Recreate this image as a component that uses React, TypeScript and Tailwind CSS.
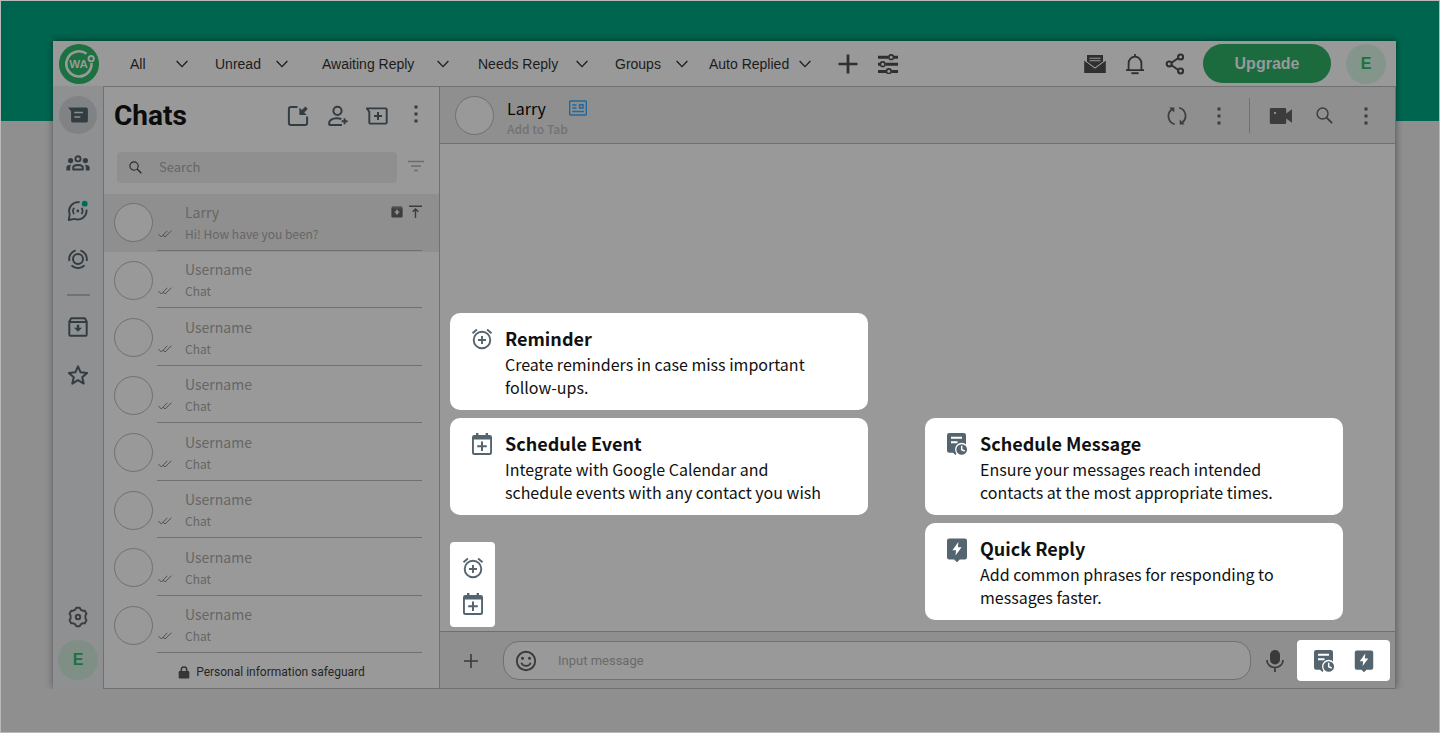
import type { ReactNode } from "react";

type IconProps = { className?: string };

const Svg = ({ className = "", box = "0 0 24 24", children }: { className?: string; box?: string; children: ReactNode }) => (
  <svg viewBox={box} className={"shrink-0 " + className} fill="none" stroke="currentColor" aria-hidden="true">
    {children}
  </svg>
);

const Logo = ({ className }: IconProps) => (
  <Svg className={className} box="0 0 40 40">
    <circle cx="20" cy="20" r="20" fill="#1b713f" stroke="none" />
    <path d="M27.5 9.8A12.6 12.6 0 1 0 32.5 19" stroke="#999" strokeWidth="2.6" />
    <circle cx="32.2" cy="14.7" r="2.6" stroke="#999" strokeWidth="2" />
    <text x="19.6" y="24.1" textAnchor="middle" fill="#999" stroke="none" fontSize="11.5" fontWeight="700" fontFamily="Liberation Sans, sans-serif">
      WA
    </text>
  </Svg>
);

const Chevron = ({ className }: IconProps) => (
  <Svg className={className} box="0 0 12 8">
    <path d="M.6 1 6 6.6 11.4 1" strokeWidth="1.3" />
  </Svg>
);

const Plus = ({ className }: IconProps) => (
  <Svg className={className} box="0 0 20 20">
    <path d="M10 .5v19M.5 10h19" strokeWidth="2.7" />
  </Svg>
);

const Sliders = ({ className }: IconProps) => (
  <Svg className={className} box="0 0 20 20">
    <path d="M0 3.2h10.5M16 3.2h4M0 10.2h2M7.5 10.2H20M0 17.4h8M13.5 17.4H20" strokeWidth="3" />
    <circle cx="13.2" cy="3.2" r="2.3" strokeWidth="1.6" />
    <circle cx="4.7" cy="10.2" r="2.3" strokeWidth="1.6" />
    <circle cx="10.8" cy="17.2" r="2.3" strokeWidth="1.6" />
  </Svg>
);

const Mail = ({ className }: IconProps) => (
  <Svg className={className} box="0 0 22 20">
    <path d="M3 1h16v7l-8 5.8L3 8z" fill="currentColor" stroke="none" />
    <path d="M5.5 4.3h11M5.5 6.7h11" stroke="#999" strokeWidth="1.1" />
    <path d="M.2 6.5 11 14.4l10.8-7.9V19H.2z" fill="currentColor" stroke="none" />
    <path d="M.4 6.2 11 14l10.6-7.8" stroke="#999" strokeWidth="1" />
  </Svg>
);

const Bell = ({ className }: IconProps) => (
  <Svg className={className} box="0 0 20 22">
    <path d="M1 17.2h18M3.6 17V10.5a6.4 6.9 0 0 1 12.8 0V17M10 1v3" strokeWidth="1.8" />
    <path d="M6.4 20.2h7.2" strokeWidth="1.9" />
  </Svg>
);

const Share = ({ className }: IconProps) => (
  <Svg className={className} box="0 0 20 22">
    <path d="m6.6 9.7 6.4-4.400M6.6 12.300l6.400 4.400" strokeWidth="2" />
    <circle cx="4.200" cy="11" r="2.500" strokeWidth="2.100" />
    <circle cx="15.600" cy="4" r="2.500" strokeWidth="2.100" />
    <circle cx="15.600" cy="18" r="2.500" strokeWidth="2.100" />
  </Svg>
);

const ChatBubble = ({ className }: IconProps) => (
  <Svg className={className} box="0 0 20 16">
    <path d="M.1.400H18a1.900 1.900 0 0 1 1.900 1.900v11.400a1.900 1.900 0 0 1-1.900 1.900H5a1.900 1.900 0 0 1-1.900-1.900V4.200z" fill="currentColor" stroke="none" />
    <path d="M6.300 5.500h8.600M6.300 10h6" stroke="#8d8e90" strokeWidth="1.700" />
  </Svg>
);

const Community = ({ className }: IconProps) => (
  <Svg className={className} box="0 0 24 16">
    <circle cx="12" cy="3.800" r="2.600" strokeWidth="1.900" />
    <circle cx="4.600" cy="5.600" r="2.600" fill="currentColor" stroke="none" />
    <circle cx="19.400" cy="5.600" r="2.600" fill="currentColor" stroke="none" />
    <path d="M7.200 14.500v-2c0-1.600 2.200-2.600 4.800-2.600s4.800 1 4.800 2.600v2z" strokeWidth="2" strokeLinejoin="round" />
    <path d="M.4 15.400v-3c0-1.600 1.600-2.700 4.600-2.700-.6 1-.8 1.900-.8 2.900v2.800zM23.600 15.400v-3c0-1.600-1.600-2.700-4.600-2.700.6 1 .8 1.900.8 2.900v2.800z" fill="currentColor" stroke="none" />
  </Svg>
);

const Channel = ({ className }: IconProps) => (
  <Svg className={className} box="0 0 22 22">
    <path d="M12.600 2.300A8.900 8.900 0 0 0 2.700 14.200L1.800 20l5.700-1.100A8.900 8.900 0 0 0 19.500 9.700" strokeWidth="1.900" strokeLinejoin="round" />
    <circle cx="10.800" cy="11" r="1.400" fill="currentColor" stroke="none" />
    <path d="M7.200 7.900a4.900 4.900 0 0 0 0 6.200M14.400 7.900a4.900 4.900 0 0 1 0 6.200" strokeWidth="1.700" />
    <circle cx="17.700" cy="3.700" r="2.900" fill="#006b56" stroke="none" />
  </Svg>
);

const Status = ({ className }: IconProps) => (
  <Svg className={className} box="0 0 20 20">
    <circle cx="10" cy="10" r="5" strokeWidth="2" />
    <path d="M7.600 1.300a9 9 0 0 0-6.200 10.700M12.400 1.300a9 9 0 0 1 6.200 10.700M3.500 16.300a9 9 0 0 0 13 0" strokeWidth="1.900" />
  </Svg>
);

const Archive = ({ className }: IconProps) => (
  <Svg className={className} box="0 0 20 20">
    <path d="M1.300 4.600 3.200 1.300h13.600l1.900 3.300v13a1.200 1.200 0 0 1-1.200 1.200h-15a1.200 1.200 0 0 1-1.200-1.200zM1.300 5h17.400" strokeWidth="2" strokeLinejoin="round" />
    <path d="M8.800 7.800h2.400v3h2.800L10 14.800l-4-4h2.800z" fill="currentColor" stroke="none" />
  </Svg>
);

const Star = ({ className }: IconProps) => (
  <Svg className={className} box="0 0 22 22">
    <path d="m11 2.300 2.600 6 6.500.6-4.900 4.300 1.500 6.400-5.700-3.400-5.700 3.400 1.500-6.400-4.900-4.300 6.500-.6z" strokeWidth="2" strokeLinejoin="round" />
  </Svg>
);

const Gear = ({ className }: IconProps) => (
  <Svg className={className} box="0 0 22 22">
    <path
      d="M8.300 3.700 9.200 1.800h3.600l.9 1.900 1.900 1 2.100-.1 1.800 3.100-1.100 1.800v3l1.100 1.800-1.800 3.100-2.100-.1-1.900 1-.9 1.900H9.200l-.9-1.900-1.900-1-2.100.1-1.800-3.100 1.100-1.800v-3L2.500 7.700l1.800-3.100 2.100.1z"
      strokeWidth="1.900"
      strokeLinejoin="round"
    />
    <circle cx="11" cy="11" r="2.200" strokeWidth="2" />
  </Svg>
);

const NewWindow = ({ className }: IconProps) => (
  <Svg className={className} box="0 0 22 22">
    <path d="M10.500 1.900H3.700a1.800 1.800 0 0 0-1.800 1.800v14.600a1.800 1.800 0 0 0 1.800 1.800h14.600a1.800 1.800 0 0 0 1.800-1.800V11.500" strokeWidth="2" />
    <path d="M12.400 2.600v7.300h7.300l-2.500-2.500 3.500-3.500-2.300-2.300-3.500 3.500z" fill="currentColor" stroke="none" />
  </Svg>
);

const AddUser = ({ className }: IconProps) => (
  <Svg className={className} box="0 0 22 22">
    <circle cx="10.500" cy="5.800" r="4.100" strokeWidth="2" />
    <path d="M15 20.100H3.700a1.600 1.600 0 0 1-1.600-1.600c0-3.400 3.200-5.300 7.500-5.300 1.900 0 3.400.2 4.700.9" strokeWidth="2" />
    <path d="M17.600 13.200v6M14.600 16.200h6" strokeWidth="1.900" />
  </Svg>
);

const NewChat = ({ className }: IconProps) => (
  <Svg className={className} box="0 0 22 18">
    <path d="M.8 1.400h18.700a1.200 1.200 0 0 1 1.200 1.200v12.800a1.200 1.200 0 0 1-1.200 1.200H4.500a1.200 1.200 0 0 1-1.200-1.200V4.700z" strokeWidth="1.900" strokeLinejoin="round" />
    <path d="M12 5v8M8 9h8" strokeWidth="2" />
  </Svg>
);

const Dots = ({ className }: IconProps) => (
  <Svg className={className} box="0 0 4 18">
    <path d="M.5.500h3v3h-3zM.5 7.500h3v3h-3zM.5 14.500h3v3h-3z" fill="currentColor" stroke="none" />
  </Svg>
);

const Search = ({ className }: IconProps) => (
  <Svg className={className} box="0 0 14 14">
    <circle cx="5.400" cy="5.400" r="4.500" strokeWidth="1.200" />
    <path d="m8.700 8.700 4.600 4.600" strokeWidth="1.500" />
  </Svg>
);

const Filter = ({ className }: IconProps) => (
  <Svg className={className} box="0 0 18 12">
    <path d="M1 1.500h16M4 6h10M7.200 10.500h3.600" strokeWidth="1.600" />
  </Svg>
);

const Checks = ({ className }: IconProps) => (
  <Svg className={className} box="0 0 14 8">
    <path d="m.5 4 2.800 3L9.300.8M5 5l2 2L13.400.8" strokeWidth=".9" />
  </Svg>
);

const ArchiveSolid = ({ className }: IconProps) => (
  <Svg className={className} box="0 0 12 12">
    <path d="M1.400.400h9.200l1 1.700v8.400a1.100 1.100 0 0 1-1.100 1.100h-9A1.100 1.100 0 0 1 .4 10.500V2.100z" fill="currentColor" stroke="none" />
    <path d="M1.500 1.900h9" stroke="#777" strokeWidth=".6" />
    <path d="M5 3.800h2v1.700h2L6 9 3 5.500h2z" fill="#8f8f8f" stroke="none" />
  </Svg>
);

const ToTop = ({ className }: IconProps) => (
  <Svg className={className} box="0 0 13 13">
    <path d="M0 1.200h13M6.500 13V4.500M3.700 6.800l2.800-2.900 2.800 2.900" strokeWidth="1.400" />
  </Svg>
);

const Lock = ({ className }: IconProps) => (
  <Svg className={className} box="0 0 12 13">
    <rect x=".7" y="5" width="10.600" height="7.500" rx="1.200" fill="currentColor" stroke="none" />
    <path d="M3.300 5.500V3.700a2.700 2.700 0 0 1 5.400 0v1.800" strokeWidth="1.500" />
  </Svg>
);

const ContactCard = ({ className }: IconProps) => (
  <Svg className={className} box="0 0 18 16">
    <rect x=".7" y="1" width="16.600" height="14" rx=".6" strokeWidth="1.400" />
    <path d="M3.300 5h4.200M3.300 8h4.200M3.300 11.500h11.600" strokeWidth="1.400" />
    <rect x="10.600" y="4.700" width="3.400" height="3.400" strokeWidth="1.500" />
  </Svg>
);

const Sync = ({ className }: IconProps) => (
  <Svg className={className} box="0 0 20 20">
    <path d="M7.800 18.200A8.400 8.400 0 0 1 4.600 3.500M12.200 1.800a8.400 8.400 0 0 1 3.200 14.700" strokeWidth="1.700" />
    <path d="M2.300 1.600h5v5zM17.700 18.400h-5v-5z" fill="currentColor" stroke="none" />
  </Svg>
);

const Video = ({ className }: IconProps) => (
  <Svg className={className} box="0 0 24 18">
    <path d="M2 1h14a1.200 1.200 0 0 1 1.200 1.200v4.300L23 2.300v13.400l-5.800-4.200v4.300A1.200 1.200 0 0 1 16 17H2a1.200 1.200 0 0 1-1.200-1.200V2.200A1.200 1.200 0 0 1 2 1z" fill="currentColor" stroke="none" />
    <circle cx="6" cy="6" r="1" fill="#aaa" stroke="none" />
  </Svg>
);

const AlarmPlus = ({ className }: IconProps) => (
  <Svg className={className} box="0 0 24 24">
    <circle cx="12" cy="13" r="8.300" strokeWidth="1.900" />
    <path d="M12 9v8M8 13h8" strokeWidth="1.900" />
    <path d="m2.500 6.200 4.400-3.600M21.500 6.200l-4.400-3.600" strokeWidth="1.900" />
  </Svg>
);

const CalendarPlus = ({ className }: IconProps) => (
  <Svg className={className} box="0 0 24 24">
    <path d="M4.200 3H6V1h2.400v2h7.200V1H18v2h1.800A2.200 2.200 0 0 1 22 5.200v15.600a2.200 2.200 0 0 1-2.200 2.200H4.200A2.200 2.200 0 0 1 2 20.800V5.200A2.200 2.200 0 0 1 4.200 3zM3.900 7.500v12.700c0 .5.400.9.900.9h14.400c.5 0 .9-.4.900-.9V7.500z" fill="currentColor" fillRule="evenodd" stroke="none" />
    <path d="M12 9.400v9.600M7.200 14.200h9.600" strokeWidth="2" />
  </Svg>
);

const NoteClock = ({ className }: IconProps) => (
  <Svg className={className} box="0 0 24 24">
    <path d="M4.200 1h14.600A2.200 2.200 0 0 1 21 3.200v17.600H12L10.500 23 8 20.800H4.200A2.200 2.200 0 0 1 2 18.600V3.200A2.200 2.200 0 0 1 4.200 1z" fill="currentColor" stroke="none" />
    <path d="M6 5.700h11M6 10.200h6.500" stroke="white" strokeWidth="1.900" />
    <circle cx="16.700" cy="17.500" r="6" fill="currentColor" stroke="white" strokeWidth="1.300" />
    <path d="M16.700 13.800v4l3 1.200" stroke="white" strokeWidth="1.500" />
  </Svg>
);

const BoltNote = ({ className }: IconProps) => (
  <Svg className={className} box="0 0 24 26">
    <path d="M4.200 1.500h15.600A2.200 2.200 0 0 1 22 3.700v16.600a2.200 2.200 0 0 1-2.200 2.200h-5L12 25.300l-2.800-2.800h-5A2.200 2.200 0 0 1 2 20.300V3.700a2.200 2.200 0 0 1 2.200-2.200z" fill="currentColor" stroke="none" />
    <path d="m13.400 5-6 8.200h3.700L10.500 18.500l6.100-8.300h-3.700z" fill="white" stroke="none" />
  </Svg>
);

const Smiley = ({ className }: IconProps) => (
  <Svg className={className} box="0 0 22 22">
    <circle cx="11" cy="11" r="9.200" strokeWidth="1.900" />
    <path d="M6.300 12.800a4.900 4.300 0 0 0 9.400 0" strokeWidth="1.700" />
    <circle cx="7.500" cy="8.300" r="1.500" fill="currentColor" stroke="none" />
    <circle cx="14.500" cy="8.300" r="1.500" fill="currentColor" stroke="none" />
  </Svg>
);

const Mic = ({ className }: IconProps) => (
  <Svg className={className} box="0 0 18 24">
    <rect x="4" y="1" width="10" height="14.500" rx="5" fill="currentColor" stroke="none" />
    <path d="M.9 11a8.100 7.500 0 0 0 16.200 0M9 18.500V23" strokeWidth="1.700" />
  </Svg>
);

const tabs = [
  { label: "All", className: "w-[58px]" },
  { label: "Unread", className: "ml-[27px] w-[73px]" },
  { label: "Awaiting Reply", className: "ml-[34px] w-[127px]" },
  { label: "Needs Reply", className: "ml-[29px] w-[110px]" },
  { label: "Groups", className: "ml-[27px] w-[73px]" },
  { label: "Auto Replied", className: "ml-[21px] w-[102px]" },
];

function TopBar() {
  return (
    <header className="flex h-[45px] items-center bg-[#999] pr-[10px] pl-[6px] font-['Liberation_Sans',sans-serif] text-[#2f2f2f]">
      <Logo className="size-10" />
      <nav aria-label="Chat tabs" className="ml-[31px] flex items-center">
        {tabs.map((t) => (
          <button key={t.label} type="button" className={"flex items-center justify-between text-sm whitespace-nowrap text-[#1c1c1c] " + t.className}>
            {t.label}
            <Chevron className="h-2 w-3" />
          </button>
        ))}
      </nav>
      <button type="button" aria-label="Add tab" className="ml-[27px]">
        <Plus className="size-5" />
      </button>
      <button type="button" aria-label="Tab settings" className="ml-5">
        <Sliders className="size-5" />
      </button>
      <div className="ml-auto flex items-center">
        <button type="button" aria-label="Inbox">
          <Mail className="h-5 w-[22px]" />
        </button>
        <button type="button" aria-label="Notifications" className="ml-[19px]">
          <Bell className="h-[22px] w-5" />
        </button>
        <button type="button" aria-label="Share" className="ml-5">
          <Share className="h-[22px] w-5" />
        </button>
        <button type="button" className="ml-[18px] h-[39px] w-32 rounded-full bg-[#1b6b3e] text-base font-bold text-[#999]">
          Upgrade
        </button>
        <button type="button" aria-label="Account" className="ml-[15px] size-10 rounded-full bg-[#84968b] text-base font-bold text-[#1b713f]">
          E
        </button>
      </div>
    </header>
  );
}

function RailButton({ label, children, className = "" }: { label: string; children: ReactNode; className?: string }) {
  return (
    <button type="button" aria-label={label} className={"flex size-[38px] items-center justify-center rounded-full " + className}>
      {children}
    </button>
  );
}

function Rail() {
  return (
    <nav aria-label="Main" className="flex w-[50px] shrink-0 flex-col items-center bg-[#8e9092] pt-[10px] pb-[9px] text-[#323d43]">
      <div className="flex flex-col gap-[10px]">
        <RailButton label="Chats" className="bg-[#818284]">
          <ChatBubble className="h-4 w-5" />
        </RailButton>
        <RailButton label="Communities">
          <Community className="h-4 w-6" />
        </RailButton>
        <RailButton label="Channels">
          <Channel className="size-[22px]" />
        </RailButton>
        <RailButton label="Status">
          <Status className="size-5" />
        </RailButton>
      </div>
      <div className="mt-4 mb-3 h-[2px] w-[23px] bg-[#717274]" />
      <div className="flex flex-col gap-[10px]">
        <RailButton label="Archived">
          <Archive className="size-5" />
        </RailButton>
        <RailButton label="Starred">
          <Star className="size-[22px]" />
        </RailButton>
      </div>
      <div className="mt-auto flex flex-col items-center gap-1">
        <RailButton label="Settings" className="text-[#3c3c3c]">
          <Gear className="size-[22px]" />
        </RailButton>
        <button type="button" aria-label="Profile" className="size-10 rounded-full bg-[#7f8f86] font-['Liberation_Sans',sans-serif] text-base font-bold text-[#1b713f]">
          E
        </button>
      </div>
    </nav>
  );
}

const chats = [
  { name: "Larry", text: "Hi! How have you been?", active: true },
  ...Array.from({ length: 7 }, () => ({ name: "Username", text: "Chat", active: false })),
];

function ChatList() {
  return (
    <section className="flex w-[337px] shrink-0 flex-col border border-[#707070] bg-[#999]">
      <div className="flex h-[58px] items-center pr-[21px] pl-[10px] text-[#323d43]">
        <h1 className="mr-auto font-['Roboto',sans-serif] text-[28px] font-bold text-[#0c0c0c]">Chats</h1>
        <button type="button" aria-label="Open window">
          <NewWindow className="size-[22px]" />
        </button>
        <button type="button" aria-label="Add contact" className="ml-[18px]">
          <AddUser className="size-[22px]" />
        </button>
        <button type="button" aria-label="New chat" className="ml-[17px]">
          <NewChat className="h-[18px] w-[22px]" />
        </button>
        <button type="button" aria-label="More" className="ml-[26px] pb-1 text-[#3a3a3a]">
          <Dots className="h-[18px] w-1" />
        </button>
      </div>
      <div className="mt-[7px] mb-[11px] flex items-center pr-[14px] pl-[13px]">
        <label className="flex h-[31px] flex-1 items-center rounded bg-[#8f8f8f] pl-3">
          <Search className="size-[13px] text-[#2c2c2c]" />
          <input type="search" placeholder="Search" className="ml-[17px] w-full bg-transparent pb-px text-[13px] outline-none placeholder:text-[#666]" />
        </label>
        <button type="button" aria-label="Filter" className="ml-[10px] pb-1 text-[#6c6c6c]">
          <Filter className="h-3 w-[18px]" />
        </button>
      </div>
      <ul className="flex flex-1 flex-col text-[#666]">
        {chats.map((c, i) => (
          <li key={i} className={"flex min-h-14 flex-1 items-center gap-1 pr-[17px] pl-[10px] " + (c.active ? "bg-[#8f8f8f]" : "")}>
            <div className="size-[39px] shrink-0 rounded-full border border-[#707070] bg-[#999]" />
            <div className="flex h-full flex-1 items-stretch pb-px">
              <div className="flex flex-1 border-b border-[#707070]">
                <div className="flex w-7 items-end pb-3">
                  <Checks className="h-2 w-4 text-[#4a4a4a]" />
                </div>
                <div className="flex flex-1 flex-col justify-center pt-[2px]">
                  <div className="flex items-center justify-between">
                    <span className="text-sm leading-[22px]">{c.name}</span>
                    {c.active && (
                      <span className="flex items-center gap-[6px] text-[#3c3c3c]">
                        <ArchiveSolid className="size-3" />
                        <ToTop className="size-[13px]" />
                      </span>
                    )}
                  </div>
                  <span className="text-xs leading-[22px]">{c.text}</span>
                </div>
              </div>
            </div>
          </li>
        ))}
      </ul>
      <p className="flex h-[34px] items-center justify-center gap-[6px] pt-[2px] font-['Roboto',sans-serif] text-xs text-[#262626]">
        <Lock className="h-[13px] w-3 text-[#363636]" />
        Personal information safeguard
      </p>
    </section>
  );
}

function FeatureCard({ icon, title, lines }: { icon: ReactNode; title: string; lines: string[] }) {
  return (
    <article className="flex w-[418px] gap-[11px] rounded-[10px] bg-white px-5 pt-3 pb-[11px]">
      <div className="pt-[2px] text-[#54656f]">{icon}</div>
      <div className="text-[#111]">
        <h2 className="mb-px text-lg leading-[27px] font-bold">{title}</h2>
        <p className="text-base leading-[23px] whitespace-nowrap">
          {lines[0]}
          <br />
          {lines[1]}
        </p>
      </div>
    </article>
  );
}

function Conversation() {
  return (
    <main className="flex min-w-0 flex-1 flex-col border-y border-r border-[#707070] bg-[#999]">
      <div className="flex h-[57px] items-center border-b border-[#707070] bg-[#8f8f8f] pr-[27px] pl-[15px] text-[#3c3c3c]">
        <div className="size-[39px] rounded-full border border-[#707070] bg-[#999]" />
        <div className="ml-[13px] pt-[5px]">
          <div className="flex items-center gap-[23px]">
            <span className="text-base leading-[22px] text-[#050505]">Larry</span>
            <ContactCard className="h-4 w-[18px] text-[#1f6a9e]" />
          </div>
          <button type="button" className="block text-xs leading-[19px] font-medium text-[#727272]">
            Add to Tab
          </button>
        </div>
        <div className="ml-auto flex items-center pt-px">
          <button type="button" aria-label="Sync">
            <Sync className="size-5" />
          </button>
          <button type="button" aria-label="Sync options" className="ml-[30px]">
            <Dots className="h-[18px] w-1" />
          </button>
          <span className="mr-[19px] ml-7 h-[35px] w-px bg-[#707070]" />
          <button type="button" aria-label="Video call">
            <Video className="h-[18px] w-6" />
          </button>
          <button type="button" aria-label="Search messages" className="ml-[23px]">
            <Search className="size-[17px]" />
          </button>
          <button type="button" aria-label="Chat options" className="ml-[31px]">
            <Dots className="h-[18px] w-1" />
          </button>
        </div>
      </div>
      <div className="flex flex-1 items-end gap-[57px] pl-[10px]">
        <div className="flex flex-col gap-2 pb-1">
          <FeatureCard icon={<AlarmPlus className="size-6" />} title="Reminder" lines={["Create reminders in case miss important", "follow-ups."]} />
          <FeatureCard icon={<CalendarPlus className="size-6" />} title="Schedule Event" lines={["Integrate with Google Calendar and", "schedule events with any contact you wish"]} />
          <div className="mt-[19px] flex h-[85px] w-[45px] flex-col items-center justify-center gap-3 rounded bg-white pt-[2px] text-[#54656f]">
            <button type="button" aria-label="Reminder">
              <AlarmPlus className="size-6" />
            </button>
            <button type="button" aria-label="Schedule event">
              <CalendarPlus className="size-6" />
            </button>
          </div>
        </div>
        <div className="flex flex-col gap-2 pb-[11px]">
          <FeatureCard icon={<NoteClock className="size-6" />} title="Schedule Message" lines={["Ensure your messages reach intended", "contacts at the most appropriate times."]} />
          <FeatureCard icon={<BoltNote className="h-[26px] w-6" />} title="Quick Reply" lines={["Add common phrases for responding to", "messages faster."]} />
        </div>
      </div>
      <div className="flex h-[57px] items-center border-t border-[#707070] bg-[#8f8f8f] pt-px pr-[5px] pl-6 text-[#3a3a3a]">
        <button type="button" aria-label="Attach">
          <svg viewBox="0 0 14 14" className="size-[14px]" fill="none" stroke="currentColor" strokeWidth="1.600" aria-hidden="true">
            <path d="M7 0v14M0 7h14" />
          </svg>
        </button>
        <div className="ml-[25px] flex h-[39px] flex-1 items-center rounded-2xl border border-[#707070] bg-[#999] pl-[11px]">
          <button type="button" aria-label="Emoji">
            <Smiley className="size-[22px]" />
          </button>
          <input aria-label="Message" placeholder="Input message" className="ml-[21px] w-full bg-transparent font-['Roboto',sans-serif] text-[13px] outline-none placeholder:text-[#6a6a6a]" />
        </div>
        <button type="button" aria-label="Voice message" className="ml-[15px]">
          <Mic className="h-6 w-[18px]" />
        </button>
        <div className="ml-[13px] flex h-[41px] w-[93px] items-center justify-center gap-4 rounded bg-white text-[#54656f]">
          <button type="button" aria-label="Schedule message">
            <NoteClock className="size-6" />
          </button>
          <button type="button" aria-label="Quick reply">
            <BoltNote className="h-6 w-6" />
          </button>
        </div>
      </div>
    </main>
  );
}

export default function App() {
  return (
    <div className="flex min-h-screen flex-col overflow-hidden border border-[#b9b9b9] bg-[linear-gradient(#00654f_120px,#8f8f8f_120px)] pt-10 pr-[43px] pb-[43px] pl-[52px] font-['Noto_Sans_CJK_SC',sans-serif]">
      <div className="flex flex-1 flex-col bg-[#999] shadow-[0_-1px_7px_rgba(0,0,0,0.4)] [clip-path:inset(-12px_-12px_0_-12px)]">
        <TopBar />
        <div className="flex flex-1">
          <Rail />
          <ChatList />
          <Conversation />
        </div>
      </div>
    </div>
  );
}
